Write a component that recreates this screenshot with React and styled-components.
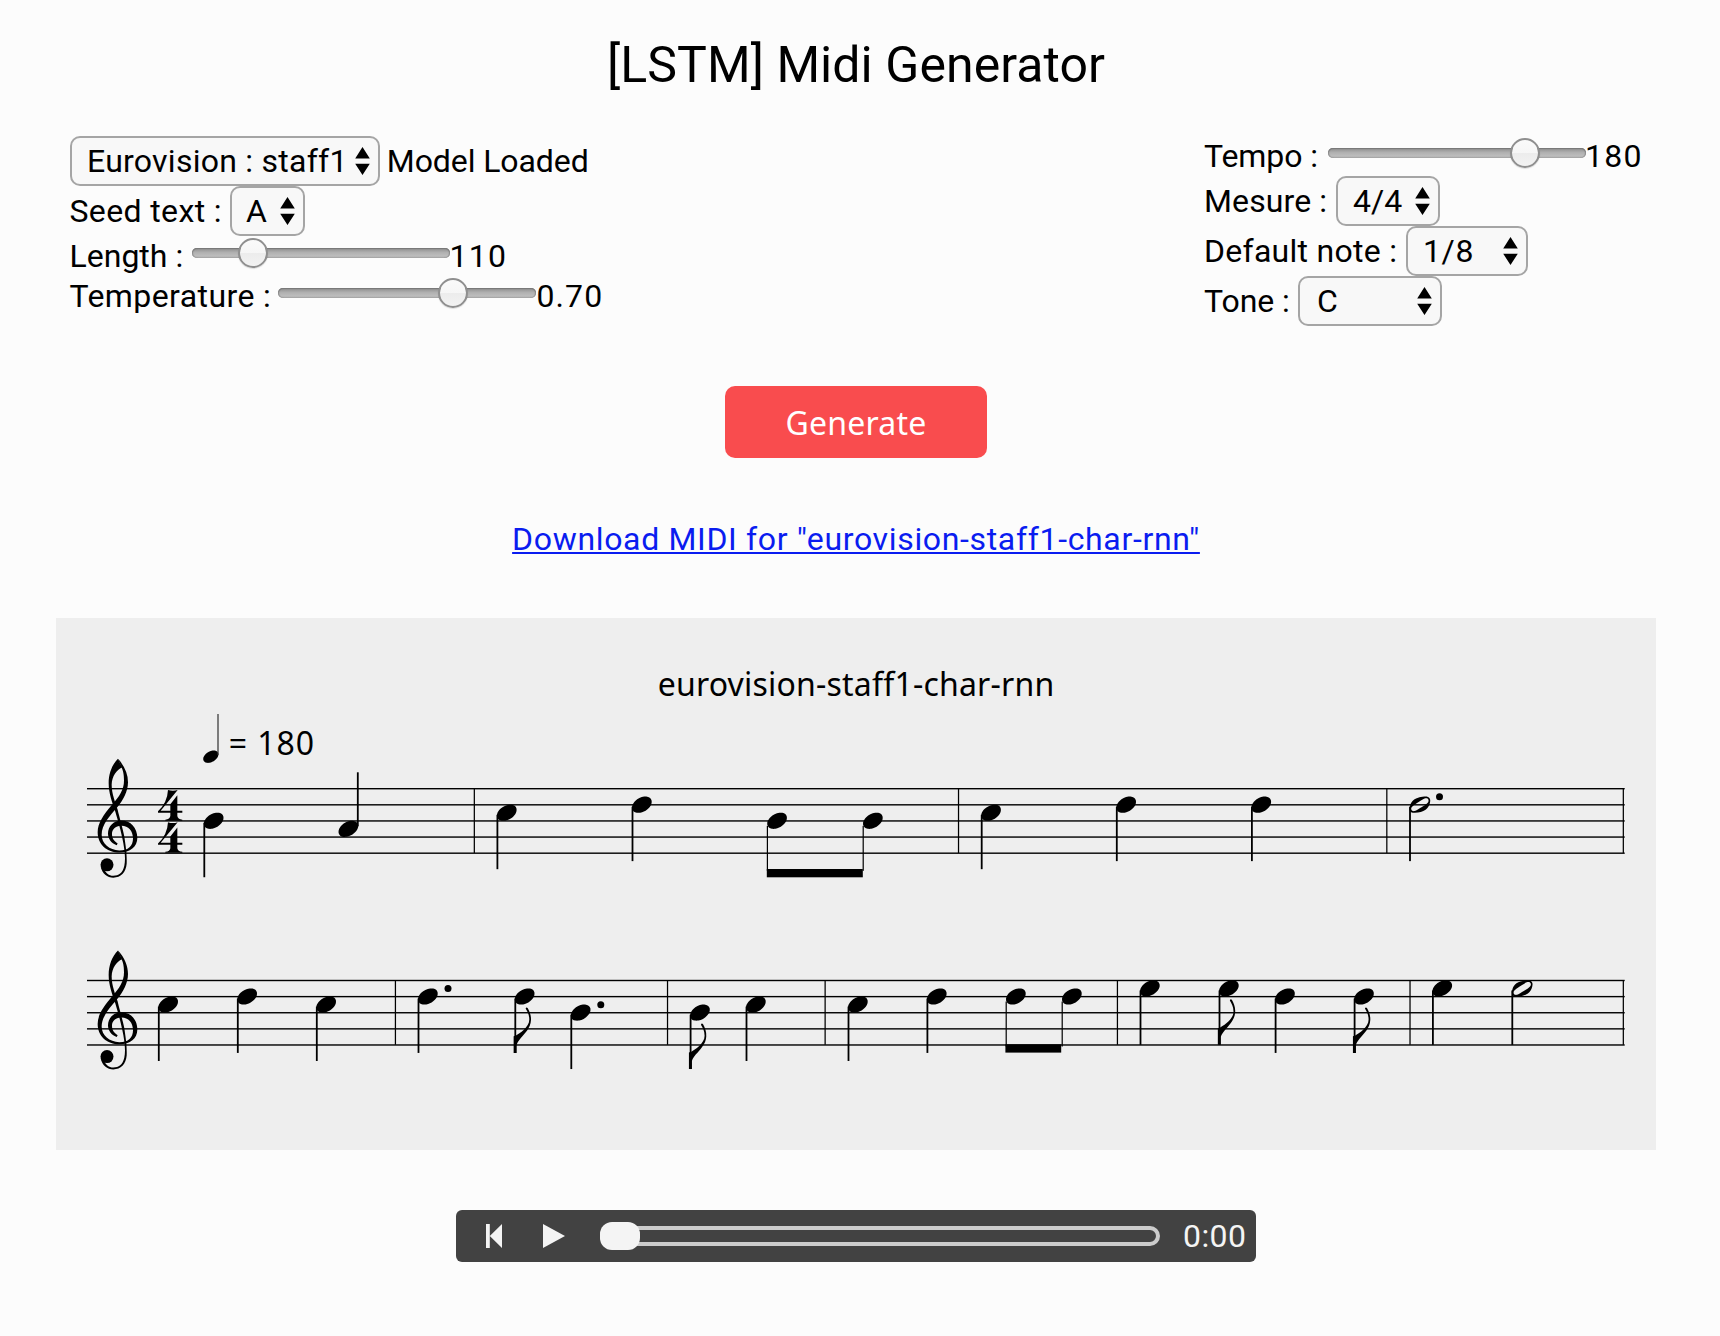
import React from "react";
import styled, { createGlobalStyle } from "styled-components";

const GlobalStyle = createGlobalStyle`
  *, *::before, *::after { box-sizing: border-box; }
  body {
    margin: 0;
    background: #fcfcfc;
    color: #000;
    font-family: Roboto, "Noto Sans", sans-serif;
    font-size: 32px;
  }
`;

const Page = styled.main`
  display: flex;
  flex-direction: column;
  align-items: center;
  width: 1600px;
  height: 1336px;
  margin-left: 56px;
`;

const Title = styled.h1`
  margin: 0;
  height: 136px;
  font-size: 50px;
  font-weight: 400;
  line-height: 130px;
  letter-spacing: 0.06px;
  white-space: nowrap;
`;

const Controls = styled.section`
  display: flex;
  justify-content: space-between;
  width: 100%;
  height: 250px;
  padding: 0 14px;
`;

const Column = styled.div`
  display: flex;
  flex-direction: column;
  width: ${(p) => p.$width}px;
`;

const Field = styled.div`
  display: flex;
  align-items: flex-start;
  height: ${(p) => (p.$short ? 40 : 50)}px;
  line-height: ${(p) => (p.$short ? 41 : 50)}px;
  white-space: nowrap;
`;

const Label = styled.span`
  flex: none;
  width: ${(p) => p.$width}px;
  text-indent: -0.5px;
  letter-spacing: ${(p) => p.$tracking || 0}px;
`;

const Value = styled.span`
  margin-left: ${(p) => p.$gap || 0}px;
  letter-spacing: ${(p) => p.$tracking || 0}px;
`;

const SelectBox = styled.button`
  display: flex;
  flex: none;
  align-items: center;
  justify-content: space-between;
  width: ${(p) => p.$width}px;
  height: 50px;
  padding: 0 8px 0 ${(p) => p.$inset}px;
  border: 2px solid #a5a5a5;
  border-radius: 10px;
  background: #f8f8f8;
  color: #000;
  font: inherit;
  line-height: 46px;
  letter-spacing: ${(p) => p.$tracking || 0}px;
`;

const Arrows = styled.svg`
  flex: none;
  width: 15px;
  height: 28px;
`;

const Track = styled.div`
  flex: none;
  width: 258px;
  height: 10px;
  margin-top: 12px;
  border-radius: 5px;
  background: linear-gradient(#8b8b8b, #b0b0b0 45%, #bdbdbd 80%, #a8a8a8);
  box-shadow: inset 0 1px 1px #777, inset 1px 0 1px #909090, inset -1px 0 1px #909090;
`;

const Thumb = styled.div`
  width: 30px;
  height: 30px;
  margin-left: ${(p) => p.$at}px;
  transform: translateY(-10px);
  border: 2px solid #8f8f8f;
  border-radius: 50%;
  background: linear-gradient(#fafafa, #f6f6f6 50%, #ececec 52%, #f2f2f2);
  background-clip: padding-box;
  box-shadow: 0 1px 1px rgba(0, 0, 0, 0.12);
`;

const GenerateButton = styled.button`
  width: 262px;
  height: 72px;
  padding: 0;
  border: 0;
  border-radius: 10px;
  background: #f94c4e;
  color: #fff;
  font: 400 32px/71px "Noto Sans", sans-serif;
  letter-spacing: 0.21px;
`;

const DownloadLink = styled.a`
  height: 46px;
  margin-top: 57px;
  line-height: 48px;
  color: #0a1cf0;
  letter-spacing: 0.66px;
  text-decoration: underline;
  text-decoration-thickness: 2px;
  text-underline-offset: 2px;
  text-decoration-skip-ink: none;
  white-space: nowrap;
`;

const ScorePanel = styled.section`
  width: 100%;
  height: 532px;
  margin-top: 57px;
  background: #eee;
`;

const ScoreDrawing = styled.svg`
  display: block;
  width: 1600px;
  height: 532px;
  font-family: "Noto Sans", sans-serif;
  font-size: 32px;
`;

const Player = styled.section`
  display: flex;
  align-items: center;
  width: 800px;
  height: 52px;
  margin-top: 60px;
  padding-left: 30px;
  border-radius: 6px;
  background: #424242;
  color: #f4f4f4;
`;

const PlayerIcon = styled.svg`
  flex: none;
  width: ${(p) => p.$width}px;
  height: 24px;
  margin-right: ${(p) => p.$gap}px;
  fill: #f4f4f4;
`;

const Progress = styled.div`
  display: flex;
  align-items: center;
  width: 560px;
  height: 20px;
  border: 4px solid #ccc;
  border-radius: 10px;
`;

const Knob = styled.div`
  flex: none;
  width: 40px;
  height: 28px;
  margin-left: -4px;
  border-radius: 12px;
  background: #f4f4f4;
`;

const Clock = styled.span`
  margin-left: 23px;
  line-height: 50px;
  letter-spacing: 0.43px;
`;

function Select({ width, tracking, inset = 15, children }) {
  return (
    <SelectBox $width={width} $tracking={tracking} $inset={inset}>
      {children}
      <Arrows viewBox="0 0 15 28">
        <path d="M7.5 0 14.8 11.5H0.2zM7.5 28 14.8 16.7H0.2z" />
      </Arrows>
    </SelectBox>
  );
}

function Slider({ at }) {
  return (
    <Track>
      <Thumb $at={at} />
    </Track>
  );
}

const HEAD =
  "M6.09-4.05c.36-.03 1.2 0 1.53.06 1.17.24 1.89.84 2.16 1.83.06.18.06.3.06.66 0 .45 0 .63-.15 1.08-.66 2.04-3.06 3.93-5.52 4.38-.54.09-1.44.09-1.83.03C1.11 3.72.36 3.12.09 2.13.03 1.95.03 1.83.03 1.47c0-.45 0-.63.15-1.08.24-.78.75-1.53 1.44-2.22 1.2-1.2 2.85-2.01 4.47-2.22z";
const HALF_HEAD =
  "M7.44-4.05c.06-.03.27-.03.48-.03 1.05 0 1.71.24 2.1.81.42.6.45 1.35.18 2.4-.42 1.59-1.14 2.73-2.16 3.39-1.41.93-3.18 1.44-5.4 1.53-1.17.03-1.89-.21-2.28-.81-.42-.6-.45-1.35-.18-2.4.42-1.59 1.14-2.73 2.16-3.39.63-.42 1.23-.72 1.98-.96.9-.3 1.65-.42 3.12-.54zm1.29.87c-.27-.09-.63-.12-.9-.03-.72.24-1.53.69-3.27 1.8-2.34 1.5-3.3 2.25-3.57 2.79-.36.72-.06 1.5.66 1.77.24.12.69.09.99 0 .84-.3 1.92-.93 4.14-2.37 1.62-1.08 2.37-1.71 2.61-2.19.36-.72.06-1.5-.66-1.77z";

const STEP = 8.06;

const STAVES = [
  {
    top: 788,
    bars: [474.3, 958.5, 1386.8, 1623.3],
    notes: [
      { x: 203.8, n: 4 },
      { x: 338.5, n: 5, up: true },
      { x: 496.9, n: 3 },
      { x: 632, n: 2 },
      { x: 767.2, n: 4, beamed: true },
      { x: 863, n: 4, beamed: true },
      { x: 981.2, n: 3 },
      { x: 1116.3, n: 2 },
      { x: 1251.4, n: 2 },
      { x: 1409.5, n: 2, half: true, dot: true },
    ],
    beam: { x: 766.8, y: 869, width: 96 },
  },
  {
    top: 979.8,
    bars: [395.4, 667.5, 825.1, 1117.4, 1410, 1623.3],
    notes: [
      { x: 158.3, n: 3 },
      { x: 237.3, n: 2 },
      { x: 316.3, n: 3 },
      { x: 418, n: 2, dot: true },
      { x: 514.8, n: 2, flag: true },
      { x: 570.8, n: 4, dot: true },
      { x: 690.1, n: 4, flag: true },
      { x: 746, n: 3 },
      { x: 848, n: 3 },
      { x: 926.9, n: 2 },
      { x: 1006, n: 2, beamed: true },
      { x: 1062, n: 2, beamed: true },
      { x: 1140, n: 1 },
      { x: 1219, n: 1, flag: true },
      { x: 1275.1, n: 2 },
      { x: 1354.1, n: 2, flag: true },
      { x: 1432.4, n: 1 },
      { x: 1511.8, n: 1, half: true },
    ],
    beam: { x: 1005.4, y: 1044.3, width: 55.8 },
  },
];

function Note({ x, y, up, half, dot, flag, beamed }) {
  return (
    <g>
      <path
        fillRule="evenodd"
        transform={`translate(${x} ${y}) scale(2)`}
        d={half ? HALF_HEAD : HEAD}
      />
      {up && <rect x={x + 18.4} y={y - 56.6} width="1.8" height="54" />}
      {!up && beamed && <rect x={x - 0.4} y={y + 5} width="1.2" height="45" />}
      {!up && !beamed && <rect x={x - 0.4} y={y + 2} width="1.8" height="54.4" />}
      {dot && <circle cx={x + 30} cy={y - 8} r="3.5" />}
      {flag && (
        <path
          transform={`translate(${x + 0.5} ${y + 56.4}) scale(0.3333)`}
          d="M-5-50L2-52C12-58 42-76 42-100C42-115 36-125 31-133Q33-139 37-135C43-124 48-112 47-98C46-75 28-58 16-44C8-34 5-28 4-24V0H-5Z"
        />
      )}
    </g>
  );
}

function Clef({ y }) {
  return (
    <g transform={`translate(50 ${y}) scale(0.33333)`}>
      <path d="M204 447C186 464 176 492 176 520C176 550 186 575 196 606C204 634 213 662 220 700C226 735 226 752 223 768C218 790 206 798 190 798C176 798 168 790 163 780L152 770C156 792 172 803.5 190 803.5C212 803.5 228 788 230 762C231 735 228 715 223 680C218 655 208 622 203 600C196 578 185 552 185 525C186 498 200 480 216 473Z" />
      <path d="M204 447C224 468 234 494 234 517C234 545 219 570 203 591C178 620 155 645 155 675C155 702 178 721 208 722C235 722 249 708 249 686C249 662 234 647 213 648C196 649 186 660 186 672C186 686 192 694 203 701L200 706C183 700 174 686 174 671C174 650 190 632 214 632C242 632 262 654 262 684C262 712 240 728 209 728C170 728 143 703 143 667C143 640 160 616 186 585C208 560 222 540 222 512C222 492 219 480 214 472Z" />
      <circle cx="171" cy="765" r="19.5" />
    </g>
  );
}

function MeterDigit({ y }) {
  return (
    <path
      transform={`translate(50 ${y}) scale(0.33333)`}
      d="M354 540Q369 545 383 540L332 602H361V583L382 556V602H397V608H382V618Q383 627 397 629V632H346V629Q360 627 361 618V608H324V604Q352 578 354 540Z"
    />
  );
}

function Staff({ top, bars, notes, beam }) {
  return (
    <g>
      {[0, 1, 2, 3, 4].map((i) => (
        <rect key={i} x="87" y={top + i * STEP * 2} width="1537.7" height="1.4" />
      ))}
      {bars.map((x) => (
        <rect key={x} x={x - 0.6} y={top + 0.5} width="1.25" height={STEP * 8} />
      ))}
      {notes.map((note) => (
        <Note key={note.x} {...note} y={top + 0.6 + note.n * STEP} />
      ))}
      <rect x={beam.x} y={beam.y} width={beam.width} height="8.3" />
      <Clef y={top - 178.2} />
    </g>
  );
}

function Score() {
  return (
    <ScoreDrawing viewBox="56 618 1600 532">
      <text x="657.7" y="695.5" letterSpacing="0.2">
        eurovision-staff1-char-rnn
      </text>
      <path transform="translate(203.2 756.7) scale(1.54)" d={HEAD} />
      <rect x="217.4" y="714" width="1.2" height="41" fill="#333" />
      <text x="228.8" y="754.5" letterSpacing="0.9">
        = 180
      </text>
      {STAVES.map((staff) => (
        <Staff key={staff.top} {...staff} />
      ))}
      <MeterDigit y={610} />
      <MeterDigit y={642.2} />
    </ScoreDrawing>
  );
}

export default function App() {
  return (
    <>
      <GlobalStyle />
      <Page>
        <Title>[LSTM] Midi Generator</Title>
        <Controls>
          <Column $width={620}>
            <Field>
              <Select width={310} tracking={0.25}>Eurovision : staff1</Select>
              <Value $gap={6.8} $tracking={-0.09}>Model Loaded</Value>
            </Field>
            <Field>
              <Label $width={160} $tracking={0.37}>Seed text :</Label>
              <Select width={75} inset={14}>A</Select>
            </Field>
            <Field $short>
              <Label $width={122}>Length :</Label>
              <Slider at={46} />
              <Value $gap={-0.5} $tracking={1.3}>110</Value>
            </Field>
            <Field $short>
              <Label $width={208} $tracking={0.41}>Temperature :</Label>
              <Slider at={160} />
              <Value $gap={0.5} $tracking={1.1}>0.70</Value>
            </Field>
          </Column>
          <Column $width={437.5}>
            <Field $short>
              <Label $width={123.5} $tracking={-0.1}>Tempo :</Label>
              <Slider at={182} />
              <Value $gap={-1} $tracking={1.3}>180</Value>
            </Field>
            <Field>
              <Label $width={131.5} $tracking={0.11}>Mesure :</Label>
              <Select width={104}>4/4</Select>
            </Field>
            <Field>
              <Label $width={201.5} $tracking={0.28}>Default note :</Label>
              <Select width={122} tracking={0.6}>1/8</Select>
            </Field>
            <Field>
              <Label $width={93.5} $tracking={-0.07}>Tone :</Label>
              <Select width={144} inset={17}>C</Select>
            </Field>
          </Column>
        </Controls>
        <GenerateButton>Generate</GenerateButton>
        <DownloadLink href="#">Download MIDI for "eurovision-staff1-char-rnn"</DownloadLink>
        <ScorePanel>
          <Score />
        </ScorePanel>
        <Player>
          <PlayerIcon $width={16} $gap={41.2} viewBox="0 0 16 24">
            <path d="M0 0h3.8v12L16 0v24L3.8 12v12H0z" />
          </PlayerIcon>
          <PlayerIcon $width={22} $gap={34.8} viewBox="0 0 22 24">
            <path d="M0 0 22 12 0 24z" />
          </PlayerIcon>
          <Progress>
            <Knob />
          </Progress>
          <Clock>0:00</Clock>
        </Player>
      </Page>
    </>
  );
}
